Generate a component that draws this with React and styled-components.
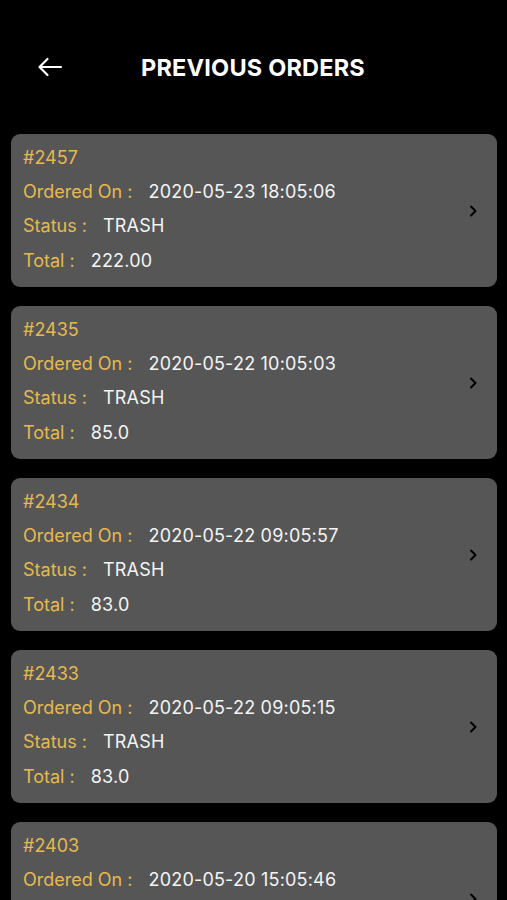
import React from "react";
import styled, { createGlobalStyle } from "styled-components";

const Global = createGlobalStyle`
  html, body { margin: 0; padding: 0; background: #000; }
  body { font-family: Inter, "Liberation Sans", Arial, sans-serif; -webkit-font-smoothing: antialiased; }
`;

const Page = styled.div`
  width: 507px;
  height: 900px;
  background: #000;
  overflow: hidden;
`;

const Header = styled.header`
  height: 134px;
  display: flex;
  align-items: center;
`;

const BackButton = styled.button`
  background: none;
  border: none;
  padding: 0;
  margin-left: 37px;
  width: 26px;
  height: 26px;
  display: flex;
  align-items: center;
  justify-content: center;
  color: #fff;
  cursor: pointer;
`;

const Title = styled.h1`
  margin: 0 0 0 78px;
  font-family: Inter, "Liberation Sans", Arial, sans-serif;
  font-size: 23.5px;
  font-weight: 700;
  color: #fff;
  letter-spacing: 0.2px;
`;

const List = styled.div`
  display: flex;
  flex-direction: column;
  gap: 19px;
  padding: 0 10px 0 11px;
`;

const Card = styled.div`
  height: 153px;
  flex-shrink: 0;
  box-sizing: border-box;
  background: #565656;
  border-radius: 9px;
  padding: 6px 18px 11px 12px;
  display: flex;
  align-items: center;
`;

const Info = styled.div`
  flex: 1;
  align-self: flex-start;
  display: flex;
  flex-direction: column;
`;

const Row = styled.div`
  height: 34.4px;
  display: flex;
  align-items: center;
  gap: 16px;
  font-size: 18px;
  white-space: nowrap;
`;

const Label = styled.span`
  color: #e6b94f;
`;

const Value = styled.span`
  color: #f4f4f4;
  letter-spacing: 0.2px;
`;

const Chevron = styled.div`
  width: 12px;
  margin-top: 6px;
  display: flex;
  justify-content: center;
  color: #000;
`;

const orders = [
  { id: "#2457", date: "2020-05-23 18:05:06", status: "TRASH", total: "222.00" },
  { id: "#2435", date: "2020-05-22 10:05:03", status: "TRASH", total: "85.0" },
  { id: "#2434", date: "2020-05-22 09:05:57", status: "TRASH", total: "83.0" },
  { id: "#2433", date: "2020-05-22 09:05:15", status: "TRASH", total: "83.0" },
  { id: "#2403", date: "2020-05-20 15:05:46", status: "TRASH", total: "83.0" },
];

export default function App() {
  return (
    <Page>
      <Global />
      <Header>
        <BackButton aria-label="Back">
          <svg width="26" height="20" viewBox="0 0 26 20" fill="none" stroke="currentColor" strokeWidth="2.2" strokeLinecap="round" strokeLinejoin="round">
            <path d="M24 10H2.5M10.5 2L2.5 10l8 8" />
          </svg>
        </BackButton>
        <Title>PREVIOUS ORDERS</Title>
      </Header>
      <List>
        {orders.map((o) => (
          <Card key={o.id}>
            <Info>
              <Row><Label>{o.id}</Label></Row>
              <Row><Label>Ordered On :</Label><Value>{o.date}</Value></Row>
              <Row><Label>Status :</Label><Value>{o.status}</Value></Row>
              <Row><Label>Total :</Label><Value>{o.total}</Value></Row>
            </Info>
            <Chevron>
              <svg width="8" height="12" viewBox="0 0 8 12" fill="none" stroke="currentColor" strokeWidth="2" strokeLinecap="round" strokeLinejoin="round">
                <path d="M2 1.5L6.5 6L2 10.5" />
              </svg>
            </Chevron>
          </Card>
        ))}
      </List>
    </Page>
  );
}
